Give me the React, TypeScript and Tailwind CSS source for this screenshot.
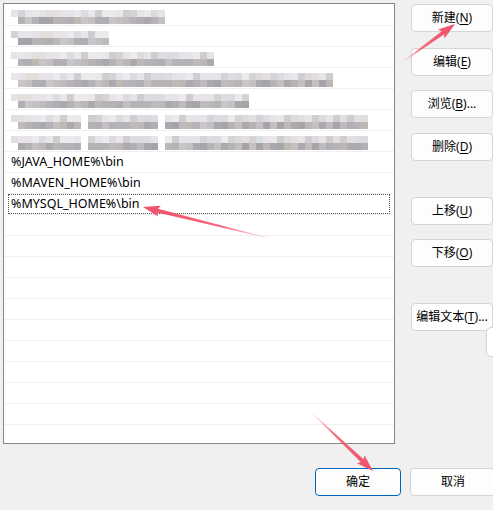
import type { ReactNode } from "react";

const uiFont = "font-['Noto_Sans','Noto_Sans_CJK_SC',sans-serif]";

// pseudo-random mosaic for the blurred (hidden) path entries
function rand(seed: number) {
  const x = Math.sin(seed * 9301 + 49297) * 233280;
  return x - Math.floor(x);
}

const lightTones = ["#e6e4e8", "#dcdadd", "#d6d3d6", "#e3dfdc", "#d0cdd0", "#eceaec", "#dadde2", "#e9e7ea"];
const darkTones = ["#b6b3b6", "#aba9ad", "#bfbbbc", "#a6a4a9", "#c4c0c2", "#b1afb5", "#bcb8b3", "#c9c6c9"];

function Mosaic({ width, seed, gaps = [] }: { width: number; seed: number; gaps?: number[] }) {
  const count = Math.floor(width / 7);
  return (
    <div className="flex flex-col pl-[3px] pt-[5px]">
      <div className="flex h-[7px]">
        {Array.from({ length: count }).map((_, i) => (
          <div
            key={i}
            className="w-[7px] h-full shrink-0"
            style={{
              background: gaps.includes(i) ? "transparent" : lightTones[Math.floor(rand(seed + i) * lightTones.length)],
            }}
          />
        ))}
      </div>
      <div className="flex h-[7px] pl-[7px]">
        {Array.from({ length: count - 1 }).map((_, i) => (
          <div
            key={i}
            className="w-[7px] h-full shrink-0"
            style={{
              background: gaps.includes(i + 1)
                ? "transparent"
                : darkTones[Math.floor(rand(seed * 3 + i) * darkTones.length)],
            }}
          />
        ))}
      </div>
    </div>
  );
}

function Row({ children, focused }: { children?: ReactNode; focused?: boolean }) {
  return (
    <div className="h-[21px] border-b border-[#f0f0f0] px-[4px]">
      <div
        className={`h-[20px] flex items-center pl-[3px] ${
          focused ? "border border-dotted border-[#555]" : ""
        }`}
      >
        {children}
      </div>
    </div>
  );
}

function Btn({ label, mn, tail, w = "w-[82px]", primary }: { label: string; mn?: string; tail?: string; w?: string; primary?: boolean }) {
  return (
    <div
      className={`${w} h-[28px] shrink-0 rounded-[4px] bg-[#fdfdfd] flex items-center justify-center text-[12px] text-black ${
        primary ? "border border-[#0067c0]" : "border border-[#d5d5d5]"
      }`}
    >
      <span className="whitespace-nowrap">
        {label}
        {mn && (
          <>
            (<span className="underline underline-offset-2">{mn}</span>)
          </>
        )}
        {tail}
      </span>
    </div>
  );
}

function arrowPoints(x0: number, y0: number, x1: number, y1: number) {
  const dx = x1 - x0;
  const dy = y1 - y0;
  const len = Math.hypot(dx, dy);
  const ux = dx / len;
  const uy = dy / len;
  const nx = -uy;
  const ny = ux;
  const headLen = 15;
  const headW = 5.5;
  const shaftW = 2;
  const bx = x1 - ux * headLen;
  const by = y1 - uy * headLen;
  const pts = [
    [x0 + nx * 0.3, y0 + ny * 0.3],
    [bx + nx * shaftW, by + ny * shaftW],
    [bx + nx * headW - ux * 2, by + ny * headW - uy * 2],
    [x1, y1],
    [bx - nx * headW - ux * 2, by - ny * headW - uy * 2],
    [bx - nx * shaftW, by - ny * shaftW],
    [x0 - nx * 0.3, y0 - ny * 0.3],
  ];
  return pts.map((p) => p.map((v) => v.toFixed(1)).join(",")).join(" ");
}

const arrows = [
  { id: "a1", x0: 404, y0: 61, x1: 455, y1: 24 },
  { id: "a2", x0: 268, y0: 238, x1: 143, y1: 207 },
  { id: "a3", x0: 313, y0: 414, x1: 373, y1: 471 },
];

export default function App() {
  const blurred = [
    { w: 154, seed: 1, gaps: [] as number[] },
    { w: 98, seed: 2, gaps: [] },
    { w: 203, seed: 3, gaps: [] },
    { w: 327, seed: 4, gaps: [] },
    { w: 238, seed: 5, gaps: [] },
    { w: 357, seed: 6, gaps: [10, 21] },
    { w: 357, seed: 7, gaps: [10, 21] },
  ];

  return (
    <div className={`relative w-[493px] h-[510px] overflow-hidden bg-[#f0f0f0] ${uiFont}`}>
      <div className="flex pt-[3px] pl-[3px]">
        <div className="w-[392px] h-[441px] shrink-0 border border-[#858585] bg-white pt-[1px] overflow-hidden">
          {blurred.map((b) => (
            <Row key={b.seed}>
              <div className="self-start -ml-[3px]">
                <Mosaic width={b.w} seed={b.seed} gaps={b.gaps} />
              </div>
            </Row>
          ))}
          <Row>
            <span className="text-[12.5px] text-black">%JAVA_HOME%\bin</span>
          </Row>
          <Row>
            <span className="text-[12.5px] text-black">%MAVEN_HOME%\bin</span>
          </Row>
          <Row focused>
            <span className="text-[12.5px] text-black -ml-px">%MYSQL_HOME%\bin</span>
          </Row>
          {Array.from({ length: 11 }).map((_, i) => (
            <Row key={`e${i}`} />
          ))}
        </div>

        <div className="flex flex-col ml-[16px] pt-[1px]">
          <Btn label="新建" mn="N" />
          <div className="mt-[16px]">
            <Btn label="编辑" mn="E" />
          </div>
          <div className="mt-[14px]">
            <Btn label="浏览" mn="B" tail="..." />
          </div>
          <div className="mt-[15px]">
            <Btn label="删除" mn="D" />
          </div>
          <div className="mt-[36px]">
            <Btn label="上移" mn="U" />
          </div>
          <div className="mt-[14px]">
            <Btn label="下移" mn="O" />
          </div>
          <div className="mt-[36px]">
            <Btn label="编辑文本" mn="T" tail="..." />
          </div>
        </div>
      </div>

      <div className="flex gap-[9px] pl-[315px] mt-[24px]">
        <Btn label="确定" w="w-[86px]" primary />
        <Btn label="取消" w="w-[86px]" />
      </div>

      {/* partially hidden popup at the right edge */}
      <div className="absolute left-[486px] top-[327px] w-[40px] h-[30px] rounded-[5px] border border-[#d5d5d5] bg-white" />

      <svg className="absolute inset-0 pointer-events-none" width={493} height={510}>
        <defs>
          {arrows.map((a) => (
            <linearGradient
              key={a.id}
              id={a.id}
              gradientUnits="userSpaceOnUse"
              x1={a.x0}
              y1={a.y0}
              x2={a.x1}
              y2={a.y1}
            >
              <stop offset="0" stopColor="#f25a6c" stopOpacity="0.15" />
              <stop offset="0.35" stopColor="#f25a6c" stopOpacity="0.9" />
              <stop offset="1" stopColor="#f0506a" stopOpacity="1" />
            </linearGradient>
          ))}
        </defs>
        {arrows.map((a) => (
          <polygon key={a.id} points={arrowPoints(a.x0, a.y0, a.x1, a.y1)} fill={`url(#${a.id})`} />
        ))}
      </svg>
    </div>
  );
}
